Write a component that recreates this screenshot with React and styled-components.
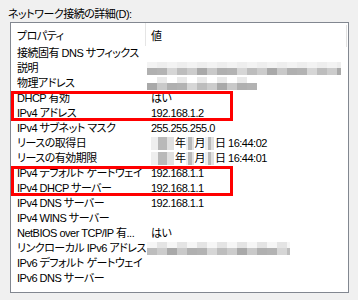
import React from "react";
import styled, { createGlobalStyle } from "styled-components";

const GlobalStyle = createGlobalStyle`
  html, body {
    margin: 0;
    padding: 0;
    background: #f0f0f0;
  }
  body {
    font-family: "Liberation Sans", "Noto Sans CJK JP", sans-serif;
    font-size: 11px;
    color: #000;
    font-feature-settings: "palt";
    letter-spacing: -0.5px;
  }
`;

const Page = styled.div`
  width: 358px;
  height: 300px;
  padding: 6px 10px 0 10px;
  box-sizing: border-box;
`;

const Title = styled.div`
  height: 16px;
  line-height: 16px;
  margin-left: -2px;
`;

const Panel = styled.div`
  width: 339px;
  height: 271px;
  box-sizing: border-box;
  border: 1px solid #828790;
  background: #fff;
  overflow: hidden;
`;

const Header = styled.div`
  display: grid;
  grid-template-columns: 135px 1fr;
  height: 23px;
  position: relative;
`;

const HeadCell = styled.div`
  display: flex;
  align-items: center;
  padding-left: ${(p) => p.$pad}px;
  border-right: ${(p) => (p.$sep ? "1px solid #e5e5e5" : "none")};
`;

const ScrollHint = styled.div`
  position: absolute;
  right: 1px;
  top: 2px;
  width: 1px;
  height: 22px;
  background: #e2e2e2;
`;

const Row = styled.div`
  display: grid;
  grid-template-columns: 135px 1fr;
  height: 15px;
  line-height: 15px;
  white-space: nowrap;
`;

const Name = styled.div`
  padding-left: 6px;
  overflow: hidden;
`;

const Value = styled.div`
  padding-left: 5px;
  display: flex;
  align-items: center;
`;

const Group = styled.div`
  position: relative;
  &::after {
    content: "";
    position: absolute;
    left: 0;
    top: 0;
    width: 222px;
    height: 100%;
    box-sizing: border-box;
    border: 3px solid #ff0000;
    pointer-events: none;
  }
`;

const MosaicWrap = styled.div`
  display: flex;
  flex-direction: column;
  margin-left: ${(p) => p.$shift || 0}px;
`;

const MosaicLine = styled.div`
  display: flex;
  height: ${(p) => p.$h}px;
`;

const Block = styled.span`
  display: block;
  width: ${(p) => p.$w}px;
  height: 100%;
  background: ${(p) => p.$c};
`;

const lightTones = ["#e9e9e9", "#f3f3f3", "#e4e4e4", "#ffffff", "#eeeeee", "#f6f6f6"];
const darkTones = ["#b3b3b3", "#cccccc", "#b0b0b0", "#bdbdbd", "#c9c9c9", "#d6d6d6", "#a9a9a9"];

const Mosaic = ({ width, seed = 1, shift = 0 }) => {
  const n = Math.ceil(width / 10);
  const top = [];
  const bottom = [];
  for (let i = 0; i < n; i++) {
    const w = i === n - 1 ? width - 10 * (n - 1) : 10;
    top.push(<Block key={i} $w={w} $c={lightTones[(i * 3 + seed) % lightTones.length]} />);
    bottom.push(<Block key={i} $w={w} $c={darkTones[(i * 5 + seed * 2) % darkTones.length]} />);
  }
  return (
    <MosaicWrap $shift={shift}>
      <MosaicLine $h={6}>{top}</MosaicLine>
      <MosaicLine $h={7}>{bottom}</MosaicLine>
    </MosaicWrap>
  );
};

const Blur = styled.span`
  display: inline-block;
  width: ${(p) => p.$w}px;
  height: 13px;
  margin-right: 1px;
  background: linear-gradient(90deg, #eeeeee 0 30%, #b9b9b9 30% 70%, #e0e0e0 70%);
`;

const DateText = ({ time }) => (
  <>
    <Blur $w={23} />
    年
    <Blur $w={8} />
    月
    <Blur $w={9} />
    日&nbsp;{time}
  </>
);

const ip = "192.168.1.";

export default function App() {
  return (
    <Page>
      <GlobalStyle />
      <Title>ネットワーク接続の詳細(D):</Title>
      <Panel>
        <Header>
          <HeadCell $pad={6} $sep>プロパティ</HeadCell>
          <HeadCell $pad={5}>値</HeadCell>
          <ScrollHint />
        </Header>
        <Row>
          <Name>接続固有 DNS サフィックス</Name>
          <Value />
        </Row>
        <Row>
          <Name>説明</Name>
          <Value>
            <Mosaic width={194} seed={1} shift={-4} />
          </Value>
        </Row>
        <Row>
          <Name>物理アドレス</Name>
          <Value>
            <Mosaic width={110} seed={3} shift={-4} />
          </Value>
        </Row>
        <Group>
          <Row>
            <Name>DHCP 有効</Name>
            <Value>はい</Value>
          </Row>
          <Row>
            <Name>IPv4 アドレス</Name>
            <Value>{ip}2</Value>
          </Row>
        </Group>
        <Row>
          <Name>IPv4 サブネット マスク</Name>
          <Value>255.255.255.0</Value>
        </Row>
        <Row>
          <Name>リースの取得日</Name>
          <Value>
            <DateText time="16:44:02" />
          </Value>
        </Row>
        <Row>
          <Name>リースの有効期限</Name>
          <Value>
            <DateText time="16:44:01" />
          </Value>
        </Row>
        <Group>
          <Row>
            <Name>IPv4 デフォルト ゲートウェイ</Name>
            <Value>{ip}1</Value>
          </Row>
          <Row>
            <Name>IPv4 DHCP サーバー</Name>
            <Value>{ip}1</Value>
          </Row>
        </Group>
        <Row>
          <Name>IPv4 DNS サーバー</Name>
          <Value>{ip}1</Value>
        </Row>
        <Row>
          <Name>IPv4 WINS サーバー</Name>
          <Value />
        </Row>
        <Row>
          <Name>NetBIOS over TCP/IP 有...</Name>
          <Value>はい</Value>
        </Row>
        <Row>
          <Name>リンクローカル IPv6 アドレス</Name>
          <Value>
            <Mosaic width={143} seed={5} shift={-4} />
          </Value>
        </Row>
        <Row>
          <Name>IPv6 デフォルト ゲートウェイ</Name>
          <Value />
        </Row>
        <Row>
          <Name>IPv6 DNS サーバー</Name>
          <Value />
        </Row>
      </Panel>
    </Page>
  );
}
